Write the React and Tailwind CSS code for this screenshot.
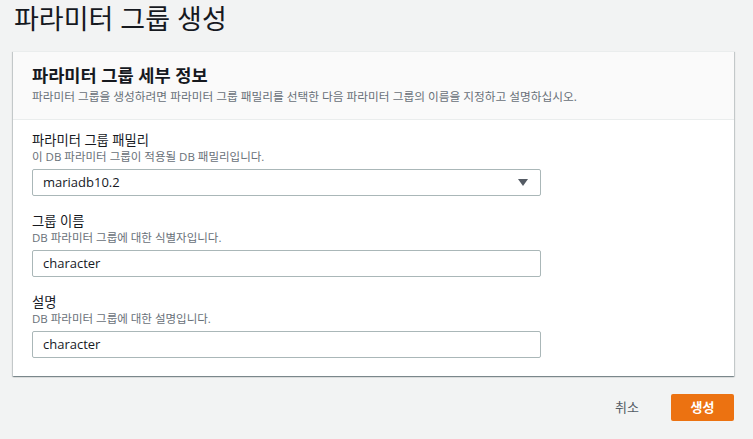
import React from "react";

const font = { fontFamily: "'Open Sans', 'Noto Sans CJK KR', sans-serif" };

function Field({ label, hint, children }) {
  return (
    <div className="flex flex-col">
      <div className="text-[13.3px] leading-[18px] text-[#16191f]">{label}</div>
      <div className="text-[11.5px] leading-[16px] text-[#687078]">{hint}</div>
      <div className="mt-[4px]">{children}</div>
    </div>
  );
}

function TextBox({ value }) {
  return (
    <div className="w-[509px] h-[27px] border border-[#aab7b8] rounded-[2px] bg-white flex items-center px-[10px] text-[13px] text-[#16191f]">
      {value}
    </div>
  );
}

export default function App() {
  return (
    <main className="w-[753px] h-[439px] bg-[#f2f3f3] overflow-hidden" style={font}>
      <h1 className="pl-[14px] pt-[2px] h-[51px] text-[27px] leading-[34px] font-normal text-[#16191f]">
        파라미터 그룹 생성
      </h1>

      <section className="ml-[13px] w-[721px] bg-white shadow-[0_1px_1px_0_rgba(0,28,36,0.3),1px_1px_1px_0_rgba(0,28,36,0.15),-1px_1px_1px_0_rgba(0,28,36,0.15)] border-t border-[#eaeded]">
        <div className="bg-[#fafafa] border-b border-[#eaeded] pl-[19px] pt-[12px] pb-[15px]">
          <h2 className="text-[17.6px] leading-[22px] font-semibold text-[#16191f]">파라미터 그룹 세부 정보</h2>
          <p className="mt-[2px] text-[11.7px] leading-[16px] text-[#687078]">
            파라미터 그룹을 생성하려면 파라미터 그룹 패밀리를 선택한 다음 파라미터 그룹의 이름을 지정하고 설명하십시오.
          </p>
        </div>

        <div className="pl-[19px] pt-[11px] pb-[18px] flex flex-col gap-[16px]">
          <Field label="파라미터 그룹 패밀리" hint="이 DB 파라미터 그룹이 적용될 DB 패밀리입니다.">
            <div className="w-[509px] h-[27px] border border-[#aab7b8] rounded-[2px] bg-white flex items-center justify-between pl-[10px] pr-[12px] text-[13px] text-[#16191f]">
              <span>mariadb10.2</span>
              <svg width="10" height="7" viewBox="0 0 10 7">
                <path d="M0 0h10L5 7z" fill="#545b64" />
              </svg>
            </div>
          </Field>
          <Field label="그룹 이름" hint="DB 파라미터 그룹에 대한 식별자입니다.">
            <TextBox value="character" />
          </Field>
          <Field label="설명" hint="DB 파라미터 그룹에 대한 설명입니다.">
            <TextBox value="character" />
          </Field>
        </div>
      </section>

      <div className="w-[734px] mt-[18px] flex justify-end items-center gap-[32px]">
        <button type="button" className="text-[13px] text-[#545b64]">취소</button>
        <button type="button" className="w-[63px] h-[27px] rounded-[2px] bg-[#ec7211] text-white text-[13px] font-bold">
          생성
        </button>
      </div>
    </main>
  );
}
